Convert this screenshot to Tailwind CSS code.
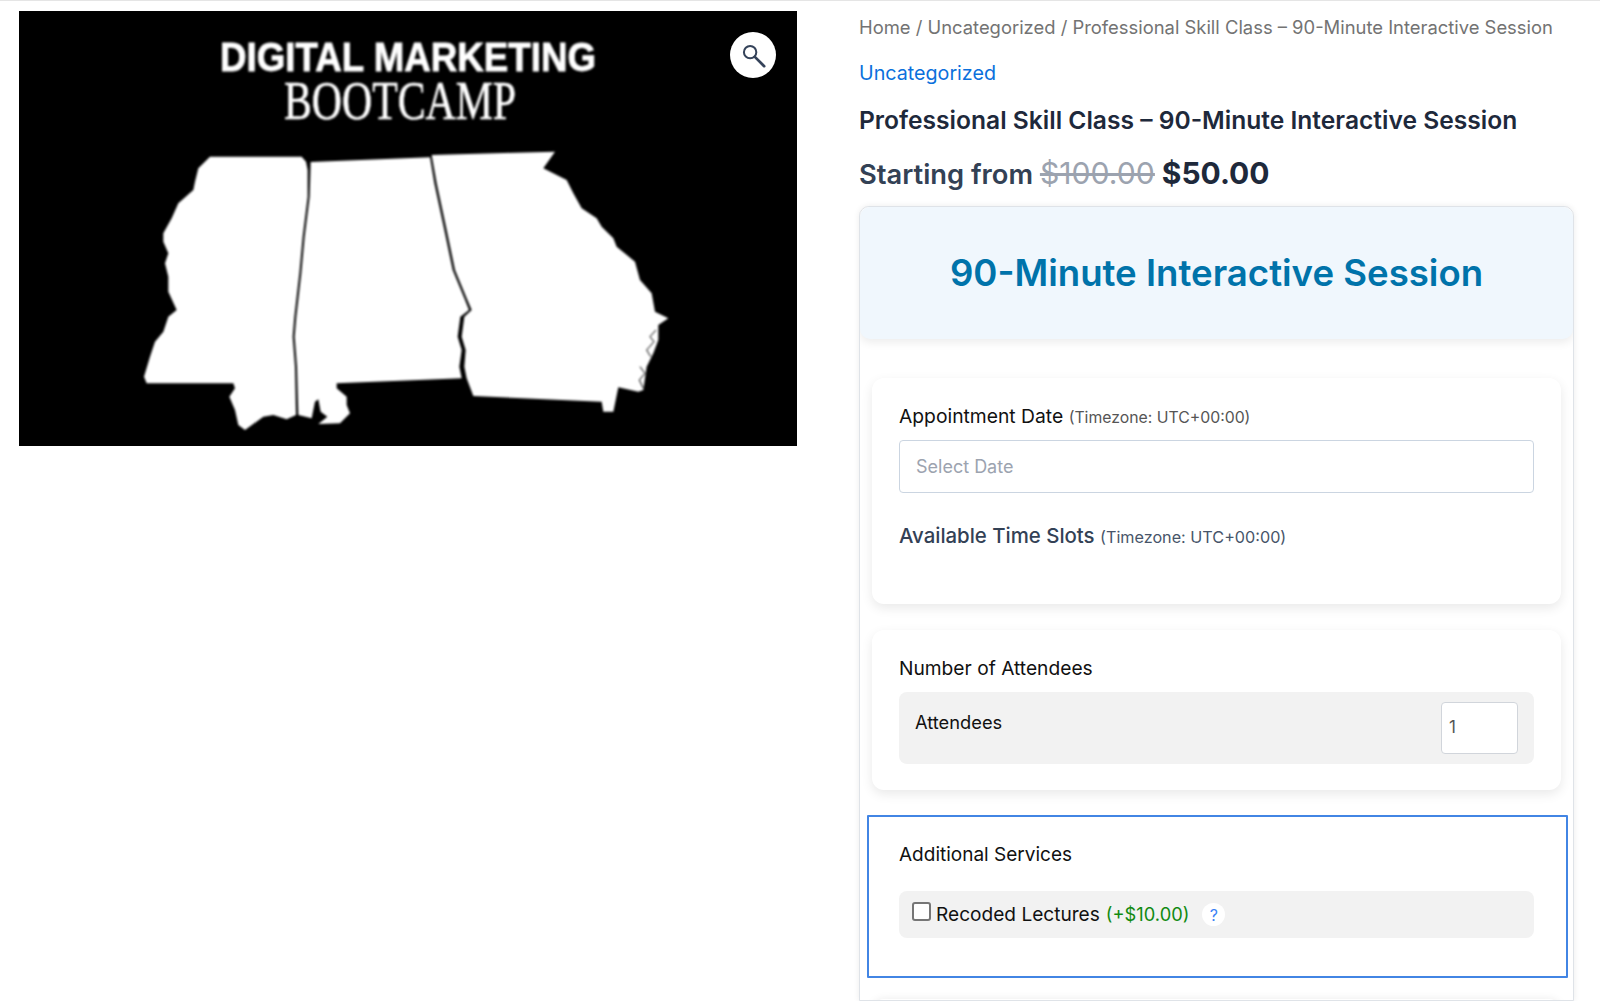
<!DOCTYPE html>
<html lang="en">
<head>
    <meta charset="UTF-8" />
    <title>Professional Skill Class – 90-Minute Interactive Session</title>
    <script src="https://cdn.jsdelivr.net/npm/@tailwindcss/browser@4"></script>
</head>
<body class="h-[1001px] overflow-hidden bg-white font-['Inter',sans-serif]">
<div class="h-px bg-[#e5e5e5]"></div>
<div class="flex h-[1000px] overflow-hidden">

    <!-- Product image -->
    <div class="relative ml-[19px] mt-[10px] h-[435px] w-[778px] shrink-0 bg-black">
        <svg viewBox="19 11 778 435" width="778" height="435" class="block blur-[0.8px]">
            <text x="220" y="71" textLength="376" lengthAdjust="spacingAndGlyphs" fill="#fff" stroke="#fff" stroke-width="0.8" font-size="40" font-weight="700" font-family="Liberation Sans">DIGITAL MARKETING</text>
            <text x="284" y="119" textLength="232" lengthAdjust="spacingAndGlyphs" fill="#fff" stroke="#fff" stroke-width="0.6" font-size="54" font-family="Liberation Serif">BOOTCAMP</text>
            <g transform="translate(130 140) scale(0.33333)" fill="#fff">
                <!-- Mississippi -->
                <path d="M240,50 L515,50 L528,65 L533,90 L533,170 L518,290 L508,400 L493,530 L488,590 L495,680 L498,825 L470,838 L430,825 L400,830 L345,870 L325,855 L315,810 L298,770 L315,745 L310,730 L50,730 L42,710 L60,650 L75,605 L100,575 L115,530 L140,510 L115,455 L115,410 L105,370 L115,340 L100,305 L100,280 L125,235 L145,190 L190,150 L195,125 L205,85 Z" />
                <!-- Alabama -->
                <path d="M542,66 L900,52 L913,130 L943,270 L968,390 L1003,475 L1017,510 L991,530 L983,590 L995,630 L988,680 L995,715 L810,722 L620,730 L620,745 L650,770 L650,795 L660,820 L630,850 L565,852 L592,830 L572,815 L565,778 L555,785 L545,835 L505,825 L501,680 L494,590 L499,530 L514,400 L524,290 L539,170 Z" />
                <!-- Georgia -->
                <path d="M905,45 L1275,35 L1240,85 L1310,120 L1330,160 L1355,205 L1400,235 L1415,260 L1450,295 L1460,320 L1515,365 L1530,420 L1565,460 L1575,515 L1615,535 L1585,555 L1585,600 L1570,640 L1550,680 L1540,750 L1525,755 L1465,742 L1450,815 L1420,815 L1415,785 L1030,768 L1010,715 L1003,680 L1007,630 L995,590 L1003,530 L1025,510 L1010,475 L975,390 L950,270 L920,130 Z" />
                <path d="M1578,570 L1560,590 L1572,605 L1550,630 L1562,650 M1530,680 L1545,700 L1528,720 L1540,745" fill="none" stroke="#000" stroke-width="3" />
            </g>
        </svg>
        <!-- Zoom button -->
        <div class="absolute left-[711px] top-[21px] flex h-[46px] w-[46px] items-center justify-center rounded-full bg-white">
            <svg viewBox="0 0 24 24" class="h-[27px] w-[27px]" fill="none" stroke="#35435a" stroke-width="1.8" stroke-linecap="round">
                <circle cx="9" cy="9" r="5.5" />
                <path d="M13.2 13.2 L21.5 21.5" stroke-width="2.4" />
            </svg>
        </div>
    </div>

    <!-- Summary -->
    <div class="ml-[62px] w-[716px] shrink-0">
        <div class="mt-[14px] h-[24px] whitespace-nowrap text-[18.4px] leading-[24px] text-[#737373]">Home / Uncategorized / Professional Skill Class – 90-Minute Interactive Session</div>
        <div class="mt-[21px] h-[26px] text-[19.7px] leading-[26px] text-[#0b70dc]">Uncategorized</div>
        <h1 class="mt-[17px] h-[34px] whitespace-nowrap text-[24.6px] font-semibold leading-[34px] text-[#1e293b]">Professional Skill Class – 90-Minute Interactive Session</h1>
        <div class="mt-[17px] h-[38px] whitespace-nowrap text-[27.3px] font-semibold leading-[38px] text-[#334155]">Starting from <span class="text-[30.2px] font-normal text-[#9ca3af] line-through">$100.00</span> <span class="text-[30px] font-bold text-[#1e293b]">$50.00</span></div>

        <!-- Booking form -->
        <div class="mt-[14px] h-[795px] w-[715px] overflow-hidden rounded-t-[10px] border border-[#dfe3e8] bg-white shadow-[0_0_6px_rgba(0,0,0,0.08)]">
            <div class="flex h-[132px] items-center justify-center rounded-[10px] bg-[#f0f7fd] bg-[radial-gradient(#dfecf8_0.6px,transparent_0.6px)] bg-[length:4px_4px] shadow-[0_4px_8px_rgba(0,0,0,0.07)]">
                <h2 class="text-[36.6px] font-semibold text-[#0073aa]">90-Minute Interactive Session</h2>
            </div>

            <div class="mx-[12px] mt-[39px] h-[226px] rounded-[12px] bg-white px-[27px] pt-[26px] shadow-[0_4px_12px_rgba(0,0,0,0.09)]">
                <div class="h-[24px] text-[19.3px] leading-[24px] text-[#111]">Appointment Date <span class="text-[15.8px] text-[#555]">(Timezone: UTC+00:00)</span></div>
                <div class="mt-[12px] flex h-[53px] w-[635px] items-center rounded-[4px] border border-[#cbd5e1] px-[16px] text-[18px] text-[#9ca3af]">Select Date</div>
                <div class="mt-[30px] h-[26px] text-[20.4px] font-medium leading-[26px] text-[#334155]">Available Time Slots <span class="text-[16.2px] font-normal text-[#475569]">(Timezone: UTC+00:00)</span></div>
            </div>

            <div class="mx-[12px] mt-[26px] h-[160px] rounded-[12px] bg-white px-[27px] pt-[26px] shadow-[0_4px_12px_rgba(0,0,0,0.09)]">
                <div class="h-[24px] text-[19.2px] leading-[24px] text-[#111]">Number of Attendees</div>
                <div class="mt-[12px] flex h-[72px] w-[635px] justify-between rounded-[8px] bg-[#f2f2f2] pl-[16px] pr-[16px] pt-[10px]">
                    <span class="pt-[8px] text-[18.3px] leading-[24px] text-[#111]">Attendees</span>
                    <div class="flex h-[52px] w-[77px] items-center rounded-[4px] border border-[#d1d5db] bg-white px-[7px] text-[17px] text-[#555]">1</div>
                </div>
            </div>

            <div class="ml-[7px] mr-[5px] mt-[25px] h-[163px] rounded-[1px] border-2 border-[#4285e4] bg-white pl-[30px] pr-[28px] pt-[26px]">
                <div class="h-[24px] text-[19px] leading-[24px] text-[#111]">Additional Services</div>
                <div class="mt-[24px] flex h-[47px] w-[635px] items-center rounded-[8px] bg-[#f2f2f2] pl-[13px]">
                    <span class="mb-[6px] h-[19px] w-[19px] rounded-[3px] border-2 border-[#767676] bg-white"></span>
                    <span class="ml-[5px] text-[19.1px] text-[#111]">Recoded Lectures</span>
                    <span class="ml-[6px] text-[18.3px] text-[#118a11]">(+$10.00)</span>
                    <span class="ml-[13px] flex h-[23px] w-[23px] items-center justify-center rounded-full bg-white text-[16px] text-[#3b82f6]">?</span>
                </div>
            </div>

            <div class="mx-[12px] mt-[21px] h-[60px] rounded-[12px] bg-white shadow-[0_0_8px_rgba(0,0,0,0.08)]"></div>
        </div>
    </div>
</div>
</body>
</html>
